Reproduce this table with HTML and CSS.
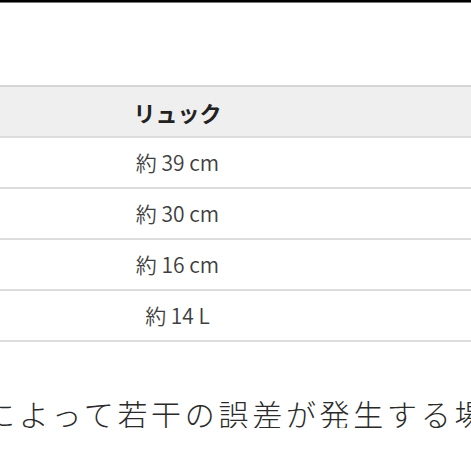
FILE: index.html
```html
<!DOCTYPE html>
<html lang="ja">
<head>
<meta charset="utf-8">
<link rel="stylesheet" href="styles.css">
</head>
<body>
<div class="topbar"></div>
<div class="spacer"></div>
<div class="table">
  <div class="row head"><div class="cell">リュック</div></div>
  <div class="row"><div class="cell">約 39 cm</div></div>
  <div class="row"><div class="cell">約 30 cm</div></div>
  <div class="row"><div class="cell">約 16 cm</div></div>
  <div class="row"><div class="cell">約 14 L</div></div>
</div>
<div class="notewrap"><p class="note">によって若干の誤差が発生する場</p></div>
</body>
</html>
```
FILE: styles.css
```css
html, body {
  margin: 0;
  padding: 0;
  background: #fff;
  overflow: hidden;
  font-family: "Noto Sans CJK JP", "Noto Sans", sans-serif;
}
.topbar {
  height: 2px;
  background: #000;
  border-bottom: 1px solid #777;
}
.spacer {
  height: 82px;
}
.table {
  border-top: 2px solid #d6d6d6;
}
.row {
  display: flex;
  height: 49px;
  border-bottom: 2px solid #dcdcdc;
  align-items: center;
}
.row.head {
  background: #efefef;
}
.cell {
  width: 355px;
  text-align: center;
  font-size: 21px;
  color: #3e3e3e;
  font-weight: 350;
  line-height: 1;
}
.head .cell {
  font-size: 22px;
  font-weight: 700;
  color: #222;
}
.notewrap {
  overflow: hidden;
  width: 471px;
}
.note {
  margin: 0;
  margin-top: 56px;
  margin-left: -15px;
  white-space: nowrap;
  font-size: 30px;
  font-weight: 300;
  letter-spacing: 3.7px;
  color: #2a2a2a;
  line-height: 1;
}
```
